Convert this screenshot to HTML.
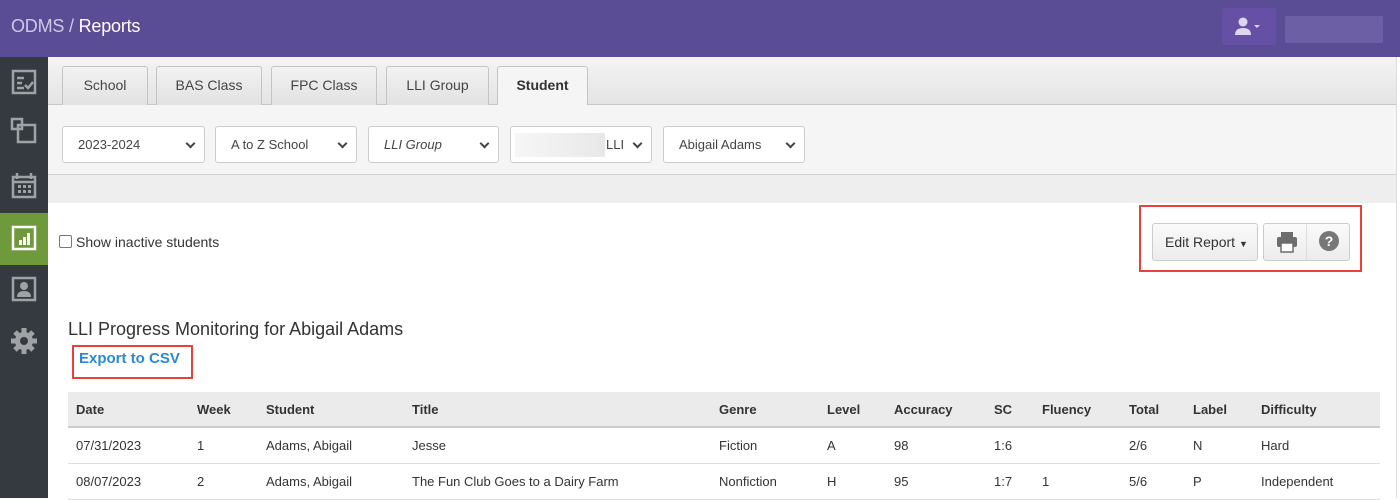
<!DOCTYPE html>
<html><head><meta charset="utf-8"><style>
*{box-sizing:border-box;margin:0;padding:0}
body{width:1400px;height:498px;overflow:hidden;font-family:"Liberation Sans",Arial,sans-serif;background:#fff;position:relative;color:#333}
.hdr{position:absolute;left:0;top:0;width:1400px;height:57px;background:#5a4c95}
.hdr .t{position:absolute;left:11px;top:16px;font-size:18px;color:#cfc9e6;letter-spacing:-0.2px}
.hdr .t b{color:#fff;font-weight:normal}
.ub{position:absolute;left:1222px;top:8px;width:54px;height:37px;background:#6650a6;border-radius:3px}
.ub2{position:absolute;left:1285px;top:16px;width:98px;height:27px;background:#6d5fa6;border-radius:2px}
.side{position:absolute;left:0;top:57px;width:48px;height:441px;background:#343a40}
.act{position:absolute;left:0;top:156px;width:48px;height:52px;background:#6f9a3c}
.tabs{position:absolute;left:48px;top:57px;width:1349px;height:48px;background:linear-gradient(#f4f4f4,#e4e4e4);border-bottom:1px solid #c8c8c8}
.tab{position:absolute;top:9px;height:39px;border:1px solid #c4c4c4;border-bottom:none;border-radius:3px 3px 0 0;background:linear-gradient(#f2f2f2,#e2e2e2);font-size:14px;color:#444;text-align:center;line-height:37px}
.tab.on{background:#f5f5f5;font-weight:bold;height:40px;color:#333}
.filt{position:absolute;left:48px;top:105px;width:1349px;height:70px;background:#f5f5f5;border-bottom:1px solid #d0d0d0}
.sel{position:absolute;top:21px;height:37px;background:#fff;border:1px solid #ccc;border-radius:3px;font-size:13px;color:#444;line-height:35px;padding-left:15px}
.sel:after{content:"";position:absolute;right:10px;top:13px;width:5px;height:5px;border-right:2px solid #444;border-bottom:2px solid #444;transform:rotate(45deg)}
.band{position:absolute;left:48px;top:175px;width:1349px;height:28px;background:#eee}
.vr{position:absolute;left:1396px;top:57px;width:1px;height:441px;background:#ddd}
.red{position:absolute;border:2px solid #e8403f}
.btn{position:absolute;top:223px;height:38px;border:1px solid #ccc;background:linear-gradient(#fafafa,#ececec);border-radius:3px}
table{position:absolute;left:68px;top:392px;width:1312px;border-collapse:collapse;font-size:13px}
th{background:#ebebeb;text-align:left;height:35px;border-bottom:2px solid #ccc;padding-left:8px;font-weight:bold;color:#333}
td{height:36px;padding-left:8px;border-bottom:1px solid #ddd;color:#333}
</style></head><body>
<div class="hdr"><div class="t">ODMS / <b>Reports</b></div>
<div class="ub"><svg width="54" height="37"><circle cx="21" cy="14" r="4.5" fill="#dcd6ee"/><path d="M13 27 Q13 20 21 20 Q29 20 29 27Z" fill="#dcd6ee"/><path d="M32 17 h6 l-3 3z" fill="#dcd6ee"/></svg></div>
<div class="ub2"></div></div>
<div class="side"><div class="act"></div>
<svg width="48" height="441" style="position:absolute;left:0;top:0">
<g fill="none" stroke="#a0a3a6" stroke-width="2.5">
<rect x="13" y="14" width="22" height="22"/><path d="M17 21h7M17 26h5M17 31h7M25 28l3 3 5-6"/>
<rect x="12" y="62" width="10" height="10"/><rect x="18" y="68" width="17" height="17"/>
<rect x="13" y="120" width="22" height="20"/><path d="M13 125h22M17 116v6M31 116v6"/>
<rect x="13" y="170" width="22" height="22" stroke="#fff"/>
<rect x="13" y="221" width="22" height="22"/>
</g>
<g fill="#fff"><rect x="19" y="183" width="3" height="5"/><rect x="23" y="180" width="3" height="8"/><rect x="27" y="176" width="3" height="12"/></g>
<g fill="#a0a3a6"><rect x="18" y="128" width="3" height="3"/><rect x="23" y="128" width="3" height="3"/><rect x="28" y="128" width="3" height="3"/><rect x="18" y="133" width="3" height="3"/><rect x="23" y="133" width="3" height="3"/><rect x="28" y="133" width="3" height="3"/>
<circle cx="24" cy="229" r="4"/><path d="M17 240 Q17 234 24 234 Q31 234 31 240Z"/>
<circle cx="24" cy="284" r="9"/><g stroke="#a0a3a6" stroke-width="5"><path d="M24 271v26M11 284h26M15 275l18 18M33 275l-18 18"/></g></g>
<circle cx="24" cy="284" r="4" fill="#343a40"/>
</svg></div>
<div class="tabs">
<div class="tab" style="left:14px;width:86px">School</div>
<div class="tab" style="left:108px;width:106px">BAS Class</div>
<div class="tab" style="left:223px;width:106px">FPC Class</div>
<div class="tab" style="left:338px;width:103px">LLI Group</div>
<div class="tab on" style="left:449px;width:91px">Student</div>
</div>
<div class="filt">
<div class="sel" style="left:14px;width:143px">2023-2024</div>
<div class="sel" style="left:167px;width:142px">A to Z School</div>
<div class="sel" style="left:320px;width:131px;font-style:italic">LLI Group</div>
<div class="sel" style="left:462px;width:142px;padding-left:95px"><span style="position:absolute;left:4px;top:6px;width:90px;height:24px;background:linear-gradient(90deg,#f6f6f6,#e8e8e8)"></span>LLI</div>
<div class="sel" style="left:615px;width:142px">Abigail Adams</div>
</div>
<div class="band"></div>
<div class="vr"></div>
<div style="position:absolute;left:59px;top:235px;width:13px;height:13px;border:1px solid #777;border-radius:2px"></div>
<div style="position:absolute;left:76px;top:234px;font-size:14px;color:#333">Show inactive students</div>
<div class="red" style="left:1139px;top:205px;width:223px;height:67px"></div>
<div class="btn" style="left:1152px;width:106px;font-size:14px;line-height:36px;padding-left:12px">Edit Report <span style="font-size:9px">▼</span></div>
<div class="btn" style="left:1263px;width:87px"><div style="position:absolute;left:42px;top:0;width:1px;height:36px;background:#ddd"></div>
<svg width="87" height="36" style="position:absolute;left:0;top:0"><rect x="13" y="13" width="20" height="10" rx="2" fill="#6d6d6d"/><rect x="17" y="8" width="12" height="5" fill="#6d6d6d"/><rect x="17" y="19" width="12" height="9" fill="#fff" stroke="#6d6d6d" stroke-width="1.5"/><circle cx="65" cy="17" r="10" fill="#777"/><text x="65" y="22" font-size="14" font-weight="bold" fill="#fff" text-anchor="middle" font-family="Liberation Sans">?</text></svg></div>
<div style="position:absolute;left:68px;top:319px;font-size:18px;color:#333">LLI Progress Monitoring for Abigail Adams</div>
<div class="red" style="left:72px;top:345px;width:121px;height:34px"></div>
<div style="position:absolute;left:79px;top:350px;font-size:15px;font-weight:bold;color:#2b88d6">Export to CSV</div>
<table>
<tr><th style="width:121px">Date</th><th style="width:69px">Week</th><th style="width:146px">Student</th><th style="width:307px">Title</th><th style="width:108px">Genre</th><th style="width:67px">Level</th><th style="width:100px">Accuracy</th><th style="width:48px">SC</th><th style="width:87px">Fluency</th><th style="width:64px">Total</th><th style="width:68px">Label</th><th>Difficulty</th></tr>
<tr><td>07/31/2023</td><td>1</td><td>Adams, Abigail</td><td>Jesse</td><td>Fiction</td><td>A</td><td>98</td><td>1:6</td><td></td><td>2/6</td><td>N</td><td>Hard</td></tr>
<tr><td>08/07/2023</td><td>2</td><td>Adams, Abigail</td><td>The Fun Club Goes to a Dairy Farm</td><td>Nonfiction</td><td>H</td><td>95</td><td>1:7</td><td>1</td><td>5/6</td><td>P</td><td>Independent</td></tr>
</table>
</body></html>
